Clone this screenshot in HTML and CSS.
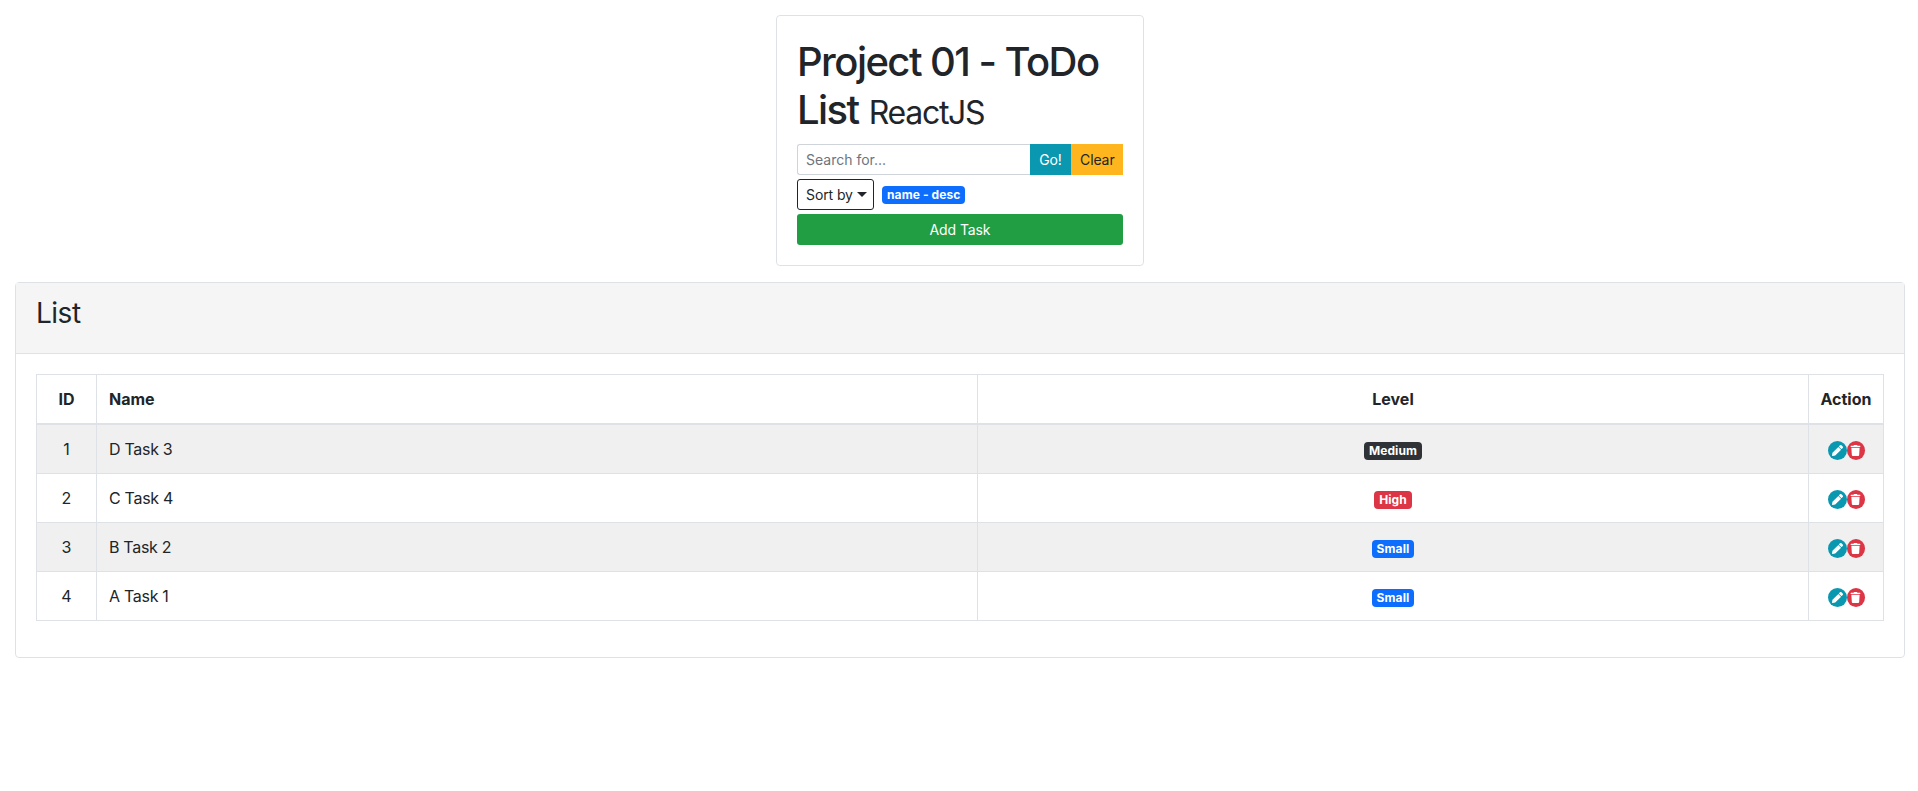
FILE: index.html
```html
<!DOCTYPE html>
<html>
    <head>
        <meta charset="utf-8">
        <meta name="viewport" content="width=device-width, initial-scale=1">
        <link rel="stylesheet" href="styles.css">
        <title>Project 01 - ToDo List</title>
    </head>
    <body>
        <svg class="sprite">
            <symbol id="pencil" viewBox="0 0 512 512"><path d="M497.9 142.100l-46.100 46.100c-4.700 4.700-12.300 4.700-17 0l-111-111c-4.700-4.700-4.700-12.300 0-17l46.100-46.100c18.700-18.700 49.100-18.700 67.900 0l60.100 60.100c18.800 18.700 18.800 49.100 0 67.900zM284.200 99.800L21.600 362.400.4 483.900c-2.900 16.400 11.400 30.600 27.800 27.800l121.500-21.300 262.600-262.600c4.700-4.700 4.700-12.300 0-17l-111-111c-4.800-4.700-12.400-4.700-17.100 0z"/></symbol>
            <symbol id="trash" viewBox="0 0 448 512"><path d="M432 32H312l-9.400-18.700A24 24 0 0 0 281.100 0H166.800a23.720 23.720 0 0 0-21.400 13.300L136 32H16A16 16 0 0 0 0 48v32a16 16 0 0 0 16 16h416a16 16 0 0 0 16-16V48a16 16 0 0 0-16-16zM53.200 467a48 48 0 0 0 47.900 45h245.800a48 48 0 0 0 47.900-45L416 128H32z"/></symbol>
        </svg>
        <div class="top">
            <div class="card panel">
                <h1 class="title">Project 01 - ToDo List <small>ReactJS</small></h1>
                <div class="search">
                    <input class="search-input" type="text" placeholder="Search for...">
                    <button type="button" class="btn btn-go">Go!</button>
                    <button type="button" class="btn btn-clear">Clear</button>
                </div>
                <div class="sort">
                    <button type="button" class="btn btn-sort">Sort by<span class="caret"></span></button>
                    <span class="badge badge-primary">name - desc</span>
                </div>
                <button type="button" class="btn btn-add">Add Task</button>
            </div>
        </div>
        <div class="card list">
            <div class="list-header"><h3>List</h3></div>
            <div class="list-body">
                <table class="tasks">
                    <thead>
                        <tr>
                            <th class="col-id">ID</th>
                            <th class="col-name">Name</th>
                            <th class="col-level">Level</th>
                            <th class="col-action">Action</th>
                        </tr>
                    </thead>
                    <tbody>
                        <tr>
                            <td class="col-id">1</td>
                            <td class="col-name">D Task 3</td>
                            <td class="col-level"><span class="badge badge-dark">Medium</span></td>
                            <td class="col-action">
                                <div class="actions">
                                    <button type="button" class="round round-edit"><svg><use href="#pencil"/></svg></button>
                                    <button type="button" class="round round-delete"><svg><use href="#trash"/></svg></button>
                                </div>
                            </td>
                        </tr>
                        <tr>
                            <td class="col-id">2</td>
                            <td class="col-name">C Task 4</td>
                            <td class="col-level"><span class="badge badge-danger">High</span></td>
                            <td class="col-action">
                                <div class="actions">
                                    <button type="button" class="round round-edit"><svg><use href="#pencil"/></svg></button>
                                    <button type="button" class="round round-delete"><svg><use href="#trash"/></svg></button>
                                </div>
                            </td>
                        </tr>
                        <tr>
                            <td class="col-id">3</td>
                            <td class="col-name">B Task 2</td>
                            <td class="col-level"><span class="badge badge-primary">Small</span></td>
                            <td class="col-action">
                                <div class="actions">
                                    <button type="button" class="round round-edit"><svg><use href="#pencil"/></svg></button>
                                    <button type="button" class="round round-delete"><svg><use href="#trash"/></svg></button>
                                </div>
                            </td>
                        </tr>
                        <tr>
                            <td class="col-id">4</td>
                            <td class="col-name">A Task 1</td>
                            <td class="col-level"><span class="badge badge-primary">Small</span></td>
                            <td class="col-action">
                                <div class="actions">
                                    <button type="button" class="round round-edit"><svg><use href="#pencil"/></svg></button>
                                    <button type="button" class="round round-delete"><svg><use href="#trash"/></svg></button>
                                </div>
                            </td>
                        </tr>
                    </tbody>
                </table>
            </div>
        </div>
    </body>
</html>
```

FILE: styles.css
```css
* {
    box-sizing: border-box;
}

body {
    font: 16px/1.5 Inter, "Liberation Sans", sans-serif;
    margin: 0;
    padding: 15px 13px 15px 15px;
    color: #212529;
    background-color: #fff;
}

.sprite {
    display: none;
}

.top {
    display: flex;
    justify-content: center;
    margin-bottom: 16px;
}

.card {
    border: 1px solid #dee2e6;
    border-radius: 4px;
    background-color: #fff;
}

.panel {
    width: 368px;
    height: 251px;
    padding: 20px;
}

.title {
    font-size: 40px;
    font-weight: 500;
    line-height: 48px;
    letter-spacing: -1.55px;
    margin: 0;
    padding-top: 2px;
    height: 108px;
}

.title small {
    font-size: 32px;
    font-weight: 400;
    letter-spacing: -1.3px;
    margin-left: 1px;
}

.btn {
    font: 14px/21px Inter, "Liberation Sans", sans-serif;
    letter-spacing: -0.1px;
    height: 31px;
    padding: 0 8px;
    border: 1px solid transparent;
    background: none;
    color: #212529;
}

.search {
    display: flex;
    margin-bottom: 4px;
}

.search-input {
    flex: 1;
    min-width: 0;
    height: 31px;
    padding: 0 8px;
    font: 14px Inter, "Liberation Sans", sans-serif;
    border: 1px solid #ced4da;
    border-right: none;
    border-radius: 3px 0 0 3px;
    color: #212529;
}

.search-input::placeholder {
    color: #6c757d;
    opacity: 1;
}

.btn-go {
    background-color: #0a97b0;
    color: #fff;
    width: 41px;
}

.btn-clear {
    background-color: #ffb61e;
    width: 52px;
}

.sort {
    display: flex;
    align-items: center;
    margin-bottom: 4px;
}

.btn-sort {
    border-color: #212529;
    border-radius: 3px;
    width: 77px;
    margin-right: 8px;
    text-align: left;
    white-space: nowrap;
}

.caret {
    display: inline-block;
    margin-left: 4px;
    vertical-align: 3px;
    border-top: 5px solid #212529;
    border-left: 5px solid transparent;
    border-right: 5px solid transparent;
}

.btn-add {
    display: block;
    width: 100%;
    background-color: #219e44;
    color: #fff;
    border-radius: 3px;
}

.badge {
    display: inline-block;
    font-size: 12px;
    font-weight: 700;
    line-height: 12px;
    letter-spacing: 0.1px;
    padding: 3px 5px;
    border-radius: 4px;
    color: #fff;
    white-space: nowrap;
}

.badge-primary {
    background-color: #0d6efd;
}

.badge-dark {
    background-color: #2f3337;
}

.badge-danger {
    background-color: #dc3545;
}

.list-header {
    height: 71px;
    padding: 13px 20px;
    background-color: #f5f5f5;
    border-bottom: 1px solid #dee2e6;
}

.list-header h3 {
    font-size: 28px;
    font-weight: 400;
    line-height: 34px;
    letter-spacing: -0.5px;
    margin: 0;
}

.list-body {
    padding: 20px 20px 36px;
}

.tasks {
    width: 100%;
    border-collapse: collapse;
    table-layout: fixed;
}

.tasks th,
.tasks td {
    border: 1px solid #dee2e6;
    padding: 12px;
    height: 49px;
    font-size: 16px;
    line-height: 24px;
}

.tasks th {
    font-weight: 700;
    border-bottom-width: 2px;
}

.tasks tbody tr:nth-child(odd) {
    background-color: #f0f0f0;
}

.col-id {
    width: 60px;
    text-align: center;
}

.tasks .col-name {
    width: 881px;
    text-align: left;
}

.tasks td.col-name {
    letter-spacing: -0.3px;
}

.col-level {
    text-align: center;
}

.col-action {
    width: 75px;
    text-align: center;
}

.tasks th.col-action {
    padding: 12px 0;
}

.tasks td.col-action {
    padding: 3px 0 0;
}

.actions {
    display: flex;
    justify-content: center;
}

.round {
    display: flex;
    align-items: center;
    justify-content: center;
    width: 19px;
    height: 19px;
    padding: 0;
    border: none;
    border-radius: 50%;
}

.round svg {
    width: 11px;
    height: 11px;
    fill: #fff;
}

.round-edit {
    background-color: #0a97b0;
}

.round-delete {
    width: 18px;
    background-color: #dc3545;
}
```
